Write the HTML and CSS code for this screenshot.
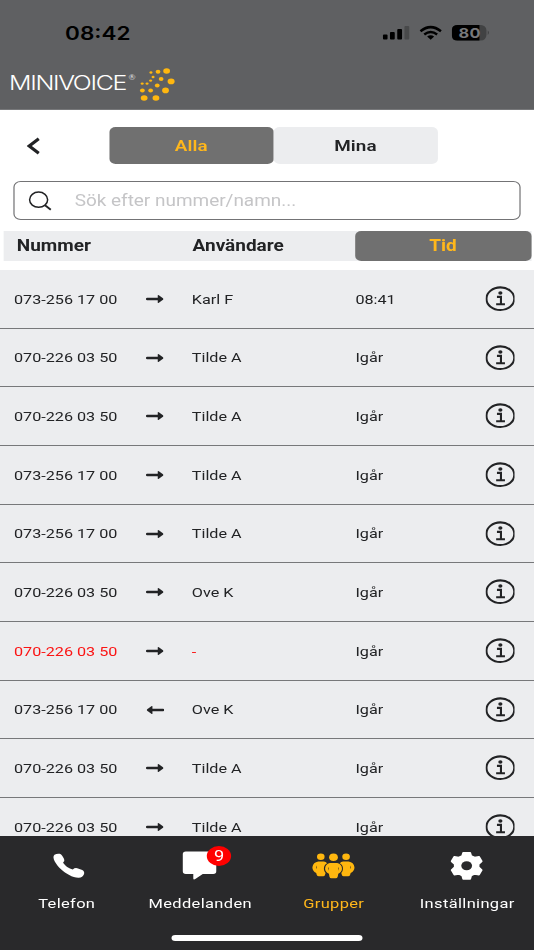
FILE: index.html
```
<!DOCTYPE html>
<html lang="sv">
<head>
<meta charset="utf-8">
<title>Minivoice</title>
<link rel="stylesheet" href="styles.css">
</head>
<body>
<svg class="defs" aria-hidden="true">
  <symbol id="right" viewBox="0 0 18 10" preserveAspectRatio="none"><path d="M1.200 5H13" stroke="currentColor" stroke-width="2.500" stroke-linecap="round"/><path d="M11.600 1.300Q12 .8 12.700 1.300L16.800 4.300Q17.500 5 16.800 5.700L12.700 8.700Q12 9.200 11.600 8.700Z" fill="currentColor"/></symbol>
  <symbol id="left" viewBox="0 0 18 10" preserveAspectRatio="none"><path d="M16.800 5H5" stroke="currentColor" stroke-width="2.500" stroke-linecap="round"/><path d="M6.400 1.300Q6 .8 5.300 1.300L1.200 4.300Q.5 5 1.200 5.700L5.300 8.700Q6 9.200 6.400 8.700Z" fill="currentColor"/></symbol>
  <symbol id="info" viewBox="0 0 30 26" preserveAspectRatio="none"><ellipse cx="15" cy="12.700" rx="13.900" ry="11.300" fill="none" stroke="currentColor" stroke-width="2.100"/><ellipse cx="15" cy="7" rx="2.100" ry="1.700" fill="currentColor"/><path d="M11.600 10.900H15.600V18M10.800 18.200H19.600" fill="none" stroke="currentColor" stroke-width="2.100"/></symbol>
</svg>
<div class="app">
  <header class="top">
    <div class="status">
      <span class="clock">08:42</span>
      <svg class="signals" viewBox="382 22 108 22" preserveAspectRatio="none">
        <rect x="383" y="34.500" width="4.600" height="5" rx="1"/><rect x="390" y="32" width="4.800" height="7.500" rx="1"/><rect x="397.300" y="29" width="4.800" height="10.500" rx="1"/><rect x="404.500" y="26" width="4.800" height="13.500" rx="1" fill="#48494a"/>
        <g fill="none" stroke="#000" stroke-width="2.500"><path d="M420.500 31.300Q430.700 23 441 31.300"/><path d="M424.300 34.500Q430.700 29.600 437.200 34.500"/></g><path d="M427.200 36.600Q430.700 34 434.200 36.600L430.700 39.700Z"/>
        <rect x="452" y="25" width="34.500" height="15.500" rx="5.500" fill="#414243"/><path d="M457.500 25H479.500V40.500H457.500Q452 40.500 452 36V29.500Q452 25 457.500 25Z"/><path d="M487.800 30.500Q490.300 32.700 487.800 35Z" fill="#414243"/>
      </svg>
      <span class="charge">80</span>
    </div>
    <div class="brand">
      <span class="word">MINIVOICE</span><span class="reg">®</span>
      <svg class="dots" viewBox="138 66 38 36" preserveAspectRatio="none" fill="#ffb70f">
        <ellipse cx="150.300" cy="72.500" rx="1.500" ry="1.200"/><ellipse cx="157.400" cy="71.800" rx="2.400" ry="2"/><ellipse cx="166" cy="71" rx="3.400" ry="2.800"/><ellipse cx="152.400" cy="77" rx="1.500" ry="1.200"/><ellipse cx="160.500" cy="79" rx="2.400" ry="2"/><ellipse cx="170.500" cy="81.400" rx="3.500" ry="2.800"/><ellipse cx="150" cy="80.600" rx="1.500" ry="1.200"/><ellipse cx="141.500" cy="83.600" rx="1.500" ry="1.200"/><ellipse cx="146.400" cy="83.600" rx="1.500" ry="1.200"/><ellipse cx="156.600" cy="85.400" rx="2.400" ry="2"/><ellipse cx="141.700" cy="90.500" rx="2.400" ry="2"/><ellipse cx="150" cy="90.500" rx="2.400" ry="2"/><ellipse cx="164.900" cy="90.400" rx="3.400" ry="2.800"/><ellipse cx="143.500" cy="98" rx="3.400" ry="2.800"/><ellipse cx="155.300" cy="98" rx="3.400" ry="2.800"/>
      </svg>
    </div>
  </header>
  <nav class="filter">
    <svg class="back" viewBox="0 0 14 18" preserveAspectRatio="none"><path d="M12 1.800 2.500 9 12 16.200" fill="none" stroke="currentColor" stroke-width="3.200"/></svg>
    <div class="tab on">Alla</div><div class="tab">Mina</div>
  </nav>
  <div class="search">
    <svg class="glass" viewBox="0 0 24 20" preserveAspectRatio="none" fill="none" stroke="currentColor"><ellipse cx="10.500" cy="8.700" rx="8.900" ry="7.600" stroke-width="1.500"/><path d="M16.500 14 22.500 18.800" stroke-width="1.900"/></svg>
    <span>Sök efter nummer/namn...</span>
  </div>
  <div class="heads"><b>Nummer</b><b class="user">Användare</b><b class="time">Tid</b></div>
  <main class="list">
    <div class="row"><span>073-256 17 00</span><svg class="arrow"><use href="#right"/></svg><span>Karl F</span><span>08:41</span><svg class="info"><use href="#info"/></svg></div>
    <div class="row"><span>070-226 03 50</span><svg class="arrow"><use href="#right"/></svg><span>Tilde A</span><span>Igår</span><svg class="info"><use href="#info"/></svg></div>
    <div class="row"><span>070-226 03 50</span><svg class="arrow"><use href="#right"/></svg><span>Tilde A</span><span>Igår</span><svg class="info"><use href="#info"/></svg></div>
    <div class="row"><span>073-256 17 00</span><svg class="arrow"><use href="#right"/></svg><span>Tilde A</span><span>Igår</span><svg class="info"><use href="#info"/></svg></div>
    <div class="row"><span>073-256 17 00</span><svg class="arrow"><use href="#right"/></svg><span>Tilde A</span><span>Igår</span><svg class="info"><use href="#info"/></svg></div>
    <div class="row"><span>070-226 03 50</span><svg class="arrow"><use href="#right"/></svg><span>Ove K</span><span>Igår</span><svg class="info"><use href="#info"/></svg></div>
    <div class="row"><span class="missed">070-226 03 50</span><svg class="arrow"><use href="#right"/></svg><span class="missed">-</span><span>Igår</span><svg class="info"><use href="#info"/></svg></div>
    <div class="row"><span>073-256 17 00</span><svg class="arrow"><use href="#left"/></svg><span>Ove K</span><span>Igår</span><svg class="info"><use href="#info"/></svg></div>
    <div class="row"><span>070-226 03 50</span><svg class="arrow"><use href="#right"/></svg><span>Tilde A</span><span>Igår</span><svg class="info"><use href="#info"/></svg></div>
    <div class="row"><span>070-226 03 50</span><svg class="arrow"><use href="#right"/></svg><span>Tilde A</span><span>Igår</span><svg class="info"><use href="#info"/></svg></div>
  </main>
  <footer class="bottom">
    <div class="items">
      <div class="item"><svg class="icon" viewBox="0 0 60 30" preserveAspectRatio="none"><path d="M17.700 3.800Q20 2.300 23 2.800C25 3.300 26 6 27.300 8Q28.300 10 26.300 11.500C28 14.800 32.500 17.600 36 18.500Q38 16.500 40.500 17.200L45.500 19Q48 20.300 47.300 23Q46 26.500 42 26.800C36 27 29 22.500 24.500 18.500C19.500 14 14.500 6.500 17.700 3.800Z" fill="#fff" transform="translate(.3 0)"/></svg><span>Telefon</span></div>
      <div class="item"><svg class="icon" viewBox="0 0 60 30" preserveAspectRatio="none"><path d="M16 0H43.500Q46.500 0 46.500 2.700V19.800Q46.500 22.500 43.500 22.500H33L25.500 27.700Q23.500 28.500 23.500 27V22.500H16Q13 22.500 13 19.800V2.700Q13 0 16 0Z" fill="#fff" transform="translate(-.5 .4)"/></svg><i class="badge">9</i><span>Meddelanden</span></div>
      <div class="item on"><svg class="icon" viewBox="0 0 60 30" preserveAspectRatio="none" fill="#ffb70f">
        <g transform="translate(-.8 0)">
        <ellipse cx="17.500" cy="5.700" rx="3.800" ry="3.200"/><ellipse cx="42.800" cy="5.700" rx="3.800" ry="3.200"/>
        <path id="side" d="M15 10.500H20.500Q22.600 10.500 23.800 12.300Q20.500 14 20.600 18Q20.700 20.700 22.300 22L21.500 24.500Q21 25.300 20 25.300H15.500Q14 25.300 13.500 24L12.900 22Q9 20 9.100 16.200Q9.800 11.300 15 10.500ZM13.400 14.500Q12.100 16.200 13.400 18.300Z" fill-rule="evenodd"/>
        <use href="#side" transform="matrix(-1 0 0 1 60.300 0)"/>
        <ellipse cx="30.200" cy="6.300" rx="4.400" ry="3.800"/>
        <path d="M26.500 12H34Q38.500 13 38.700 17.500Q38.700 21 35 22.700L34.400 25.800Q34 27.300 32.500 27.300H28Q26.500 27.300 26.200 25.800L25.600 22.700Q21.800 21 21.800 17.500Q22 13 26.500 12ZM25.600 15.800Q24.400 17.500 25.600 19.700ZM34.900 15.800Q36.100 17.500 34.900 19.700Z" fill-rule="evenodd"/>
        </g>
      </svg><span>Grupper</span></div>
      <div class="item"><svg class="icon" viewBox="0 0 60 30" preserveAspectRatio="none"><path d="M26.500 1.800H33.500L34.500 5L38 6.600L42.300 5.800L45 10.300L41.900 13.200V16.200L45 19.100L42.300 23.600L38 22.800L34.500 24.400L33.500 27.800H26.500L25.500 24.400L22 22.800L17.700 23.600L15 19.100L18.100 16.200V13.200L15 10.300L17.700 5.800L22 6.600L25.500 5Z" fill="#fff" stroke="#fff" stroke-width="1.800" stroke-linejoin="round"/><ellipse cx="30" cy="14.700" rx="5.400" ry="4.500" fill="#29292b"/></svg><span>Inställningar</span></div>
    </div>
    <div class="home"></div>
  </footer>
</div>
</body>
</html>
```
FILE: styles.css
```
* { box-sizing: border-box; }
html, body { margin: 0; overflow: hidden; background: #fff; }
.defs { display: none; }
/* The app is laid out 439px wide and widened to fill the 534px viewport. */
.app {
  width: 439px; height: 950px; overflow: hidden;
  display: flex; flex-direction: column;
  transform: scaleX(1.2164); transform-origin: 0 0;
  font-family: Roboto, "Liberation Sans", sans-serif;
  color: #222325;
}
svg { display: block; flex: none; }
.top { height: 109.500px; background: #5f6062; flex: none; border-bottom: 1px solid #77787a; }
.status { position: relative; height: 66px; padding: 22px 36px 0 53.500px; display: flex; justify-content: space-between; }
.clock { font: 600 18.500px/22px Inter, sans-serif; color: #000; letter-spacing: 0; }
.signals { width: 88.800px; height: 22px; }
.charge { position: absolute; left: 377px; top: 24px; font: 700 13.500px/18px Inter, sans-serif; color: #77787a; letter-spacing: .2px; }
.brand { display: flex; height: 36px; padding-left: 7.500px; }
.word { font: 300 20.500px/34px Inter, sans-serif; color: #fff; width: 98.200px; white-space: nowrap; letter-spacing: -1.100px; }
.reg { font: 400 7px/22px Lato, sans-serif; color: #ddd; width: 8px; }
.dots { width: 31.200px; height: 36px; }
.filter { display: flex; flex: none; height: 72.500px; padding-top: 17.500px; }
.back { width: 11.500px; height: 18px; margin: 9.500px 56px 0 22.200px; }
.tab { width: 135px; height: 36.500px; border-radius: 5px; background: #ecedef; text-align: center; font-size: 15.500px; line-height: 38.500px; font-weight: 600; letter-spacing: .1px; }
.on.tab { background: #707070; color: #ffb71b; }
.search { flex: none; height: 39px; margin: -1px 11.500px 0 11px; border: 1.300px solid #737375; border-radius: 6px; display: flex; align-items: center; padding-left: 10.700px; font-size: 15.600px; color: #c5c5c7; letter-spacing: -.01px; }
.glass { width: 20px; height: 20px; margin-right: 18.700px; color: #222325; }
.heads { flex: none; margin: 10.500px 2.500px 9px; height: 30px; background: #ecedef; display: grid; grid-template-columns: 144.800px 144.500px 1fr; line-height: 31.500px; font-size: 15.600px; }
.heads b { padding-left: 11.300px; }
.heads .user { padding-left: 11px; }
.heads .time { padding: 0; height: 30px; background: #707070; color: #ffb71b; border-radius: 5px; text-align: center; }
.list { flex: 1; min-height: 0; overflow: hidden; background: #ecedef; padding-top: .5px; }
.row { height: 58.670px; border-bottom: 1px solid #77787a; display: grid; grid-template-columns: 109px 37.200px 134.500px 107px 25px; align-items: center; padding: .7px 0 0 11.500px; font-size: 13.300px; }
.arrow { width: 15px; height: 10px; margin-left: -.4px; }
.info { width: 24.700px; height: 26px; margin-left: -.7px; }
.missed { color: #fb1414; }
.bottom { flex: none; height: 114px; background: #29292b; color: #fff; }
.items { display: grid; grid-template-columns: repeat(4, 1fr); height: 99px; padding-top: 15px; }
.item { position: relative; display: flex; flex-direction: column; align-items: center; font-size: 13.500px; letter-spacing: .3px; line-height: 18px; }
.item.on { color: #ffb71b; }
.icon { width: 49.300px; height: 30px; margin-bottom: 13px; }
.badge { position: absolute; left: 60.500px; top: -5px; width: 20px; height: 20px; border-radius: 50%; background: #f00; font-style: normal; text-align: center; font-size: 15px; line-height: 20px; letter-spacing: 0; }
.home { width: 156.500px; height: 6px; border-radius: 3px; background: #fff; margin: 0 auto; }
```
